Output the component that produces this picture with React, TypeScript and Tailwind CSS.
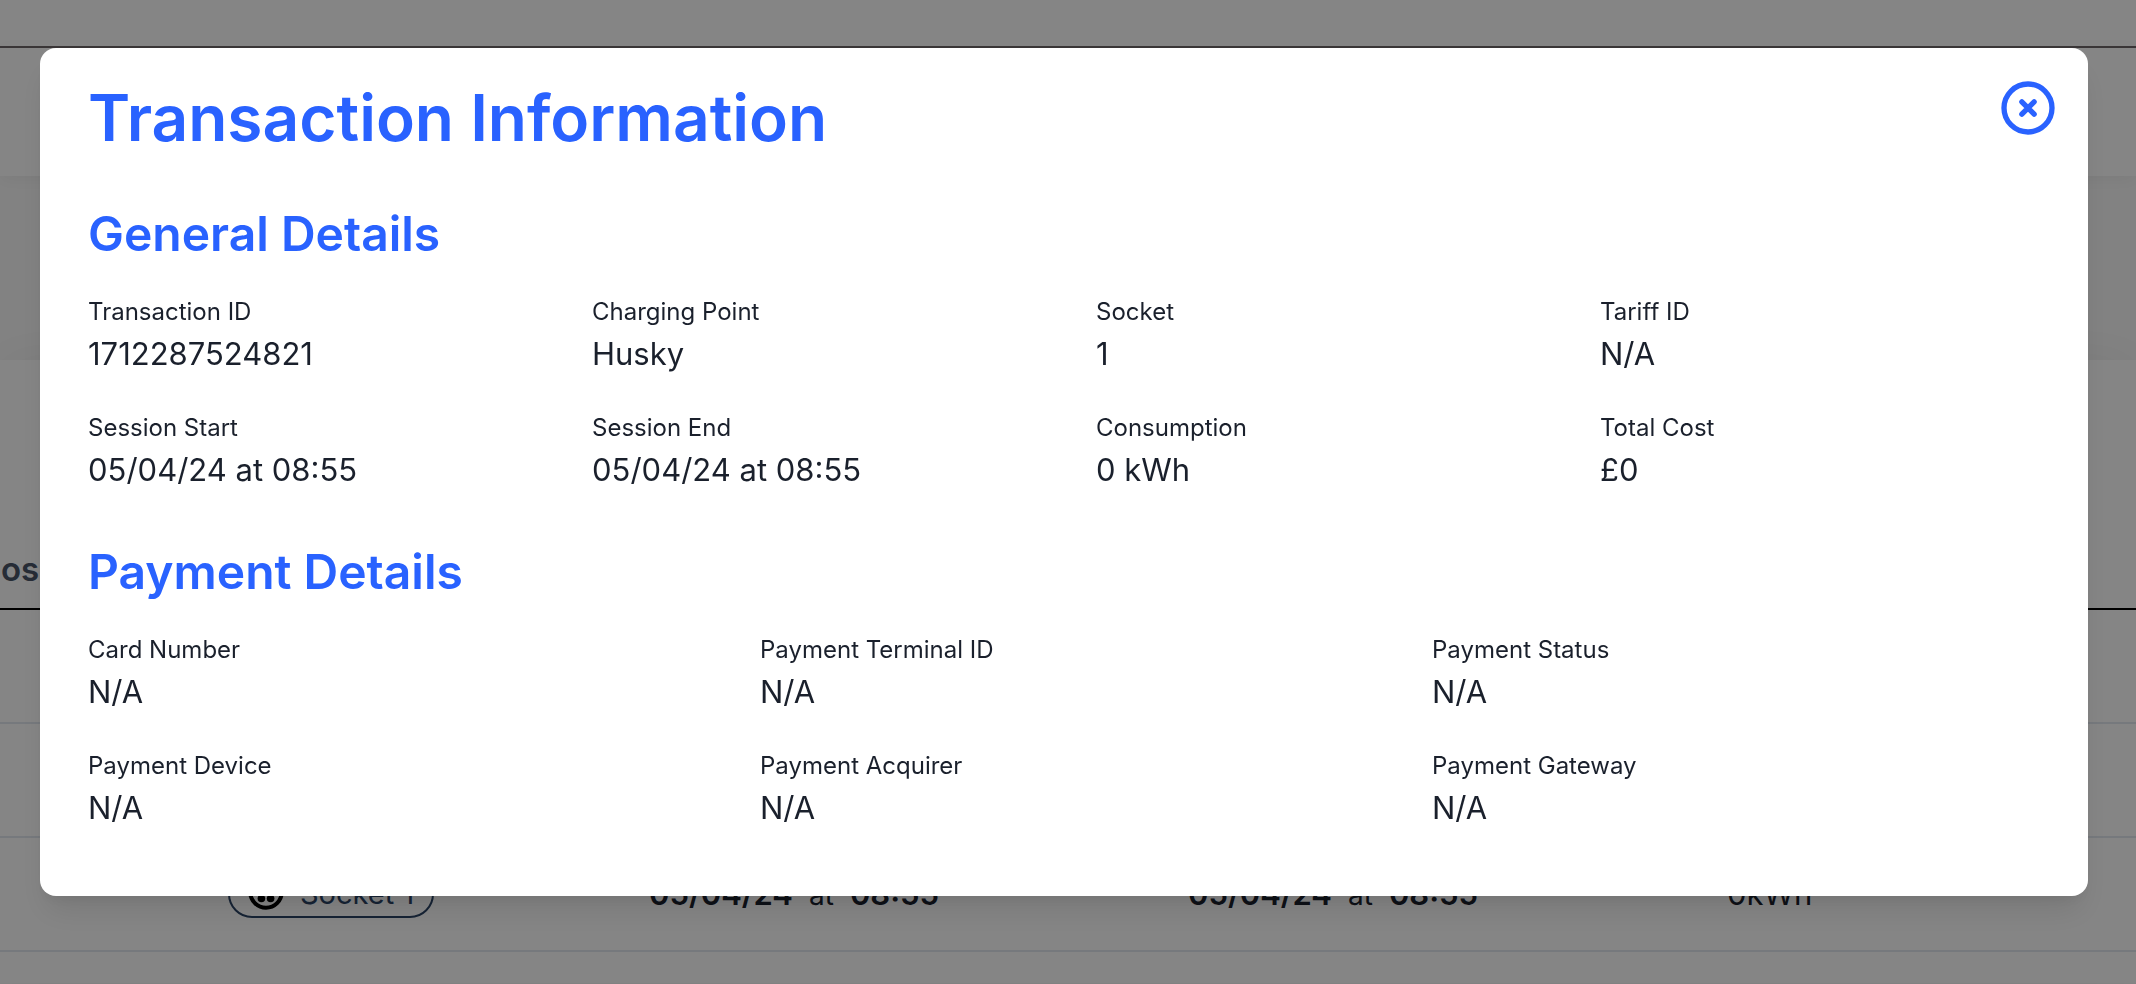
import { useState } from 'react'

const general = [
  { label: 'Transaction ID', value: '1712287524821' },
  { label: 'Charging Point', value: 'Husky' },
  { label: 'Socket', value: '1' },
  { label: 'Tariff ID', value: 'N/A' },
  { label: 'Session Start', value: '05/04/24 at 08:55' },
  { label: 'Session End', value: '05/04/24 at 08:55' },
  { label: 'Consumption', value: '0 kWh' },
  { label: 'Total Cost', value: '£0' },
]

const payment = [
  { label: 'Card Number', value: 'N/A' },
  { label: 'Payment Terminal ID', value: 'N/A' },
  { label: 'Payment Status', value: 'N/A' },
  { label: 'Payment Device', value: 'N/A' },
  { label: 'Payment Acquirer', value: 'N/A' },
  { label: 'Payment Gateway', value: 'N/A' },
]

function Detail({ label, value }: { label: string; value: string }) {
  return (
    <div>
      <dt className="text-[24px] leading-10">{label}</dt>
      <dd className="text-[31px] leading-11">{value}</dd>
    </div>
  )
}

function SocketIcon() {
  return (
    <svg viewBox="0 0 36 36" className="size-9" fill="none" aria-hidden="true">
      <circle cx="18" cy="16" r="15.7" stroke="black" strokeWidth="4" />
      <g fill="black">
        <circle cx="13" cy="9" r="2.5" />
        <circle cx="23" cy="9" r="2.5" />
        <circle cx="9.5" cy="15" r="3" />
        <circle cx="18" cy="15" r="3" />
        <circle cx="26.5" cy="15" r="3" />
        <circle cx="13.4" cy="22.5" r="3.8" />
        <circle cx="22.6" cy="22.5" r="3.8" />
      </g>
    </svg>
  )
}

function DateCell() {
  return (
    <td className="text-[31px]">
      <span className="font-semibold">05/04/24</span>
      <span className="mx-4 text-[28px]">at</span>
      <span className="font-semibold">08:55</span>
    </td>
  )
}

function TransactionsPage() {
  return (
    <div className="bg-[#fafafa]">
      <div className="h-12 border-b-2 border-[#6f686b] bg-white" />
      <div className="h-32 bg-white shadow-[0_4px_16px_rgba(0,0,0,0.05)]" />
      <div className="mt-46 bg-white pt-36 shadow-[0_0_50px_rgba(0,0,0,0.06)]">
        <table className="w-full table-fixed border-collapse text-left">
          <colgroup>
            <col className="w-57" />
            <col className="w-[421px]" />
            <col className="w-[539px]" />
            <col className="w-[539px]" />
            <col />
          </colgroup>
          <thead>
            <tr className="h-[105px] border-b-2 border-black">
              <th colSpan={5} className="pt-7 pl-px text-[33px] font-semibold text-[#4a5568]">os</th>
            </tr>
          </thead>
          <tbody>
            <tr className="h-[114px] border-b-2 border-[#e2e8f0]"><td colSpan={5} /></tr>
            <tr className="h-[114px] border-b-2 border-[#e2e8f0]"><td colSpan={5} /></tr>
            <tr className="h-[114px] border-b-2 border-[#e2e8f0]">
              <td />
              <td>
                <span className="inline-flex h-12 items-center gap-4 rounded-full border-2 border-[#2a4365] px-[18px] align-middle text-[29px] text-[#2a4365]">
                  <SocketIcon />
                  Socket 1
                </span>
              </td>
              <DateCell />
              <DateCell />
              <td className="text-[31px]">0kWh</td>
            </tr>
            <tr className="h-8"><td colSpan={5} /></tr>
          </tbody>
        </table>
      </div>
    </div>
  )
}

export default function App() {
  const [open, setOpen] = useState(true)

  return (
    <div className="h-screen overflow-hidden font-['Inter',sans-serif] text-[#1a202c]">
      <TransactionsPage />

      {open && (
        <div className="fixed inset-0 bg-black/48 pt-12 pr-12 pl-10">
          <div
            role="dialog"
            aria-labelledby="transaction-title"
            className="rounded-2xl bg-white shadow-[0_20px_30px_-6px_rgba(0,0,0,0.1),0_8px_12px_-4px_rgba(0,0,0,0.05)]"
          >
            <div className="flex items-start justify-between pt-7 pr-7 pl-12 text-[#2962ff]">
              <h1 id="transaction-title" className="mt-3 text-[64px] leading-15 font-semibold">Transaction Information</h1>
              <button type="button" aria-label="Close" onClick={() => setOpen(false)}>
                <svg viewBox="0 0 24 24" className="size-16" fill="none" stroke="currentColor" strokeWidth="2" strokeLinecap="round">
                  <circle cx="12" cy="12" r="9" />
                  <path d="M9.7 9.7l4.6 4.6M14.3 9.7l-4.6 4.6" />
                </svg>
              </button>
            </div>

            <div className="px-12 pb-[66px]">
              <h2 className="mt-15 mb-8 text-[48px] leading-13 font-semibold text-[#2962ff]">General Details</h2>
              <dl className="grid grid-cols-4 gap-x-16 gap-y-8">
                {general.map(d => <Detail key={d.label} {...d} />)}
              </dl>
              <h2 className="mt-[54px] mb-8 text-[48px] leading-13 font-semibold text-[#2962ff]">Payment Details</h2>
              <dl className="grid grid-cols-3 gap-x-16 gap-y-8">
                {payment.map(d => <Detail key={d.label} {...d} />)}
              </dl>
            </div>
          </div>
        </div>
      )}
    </div>
  )
}
